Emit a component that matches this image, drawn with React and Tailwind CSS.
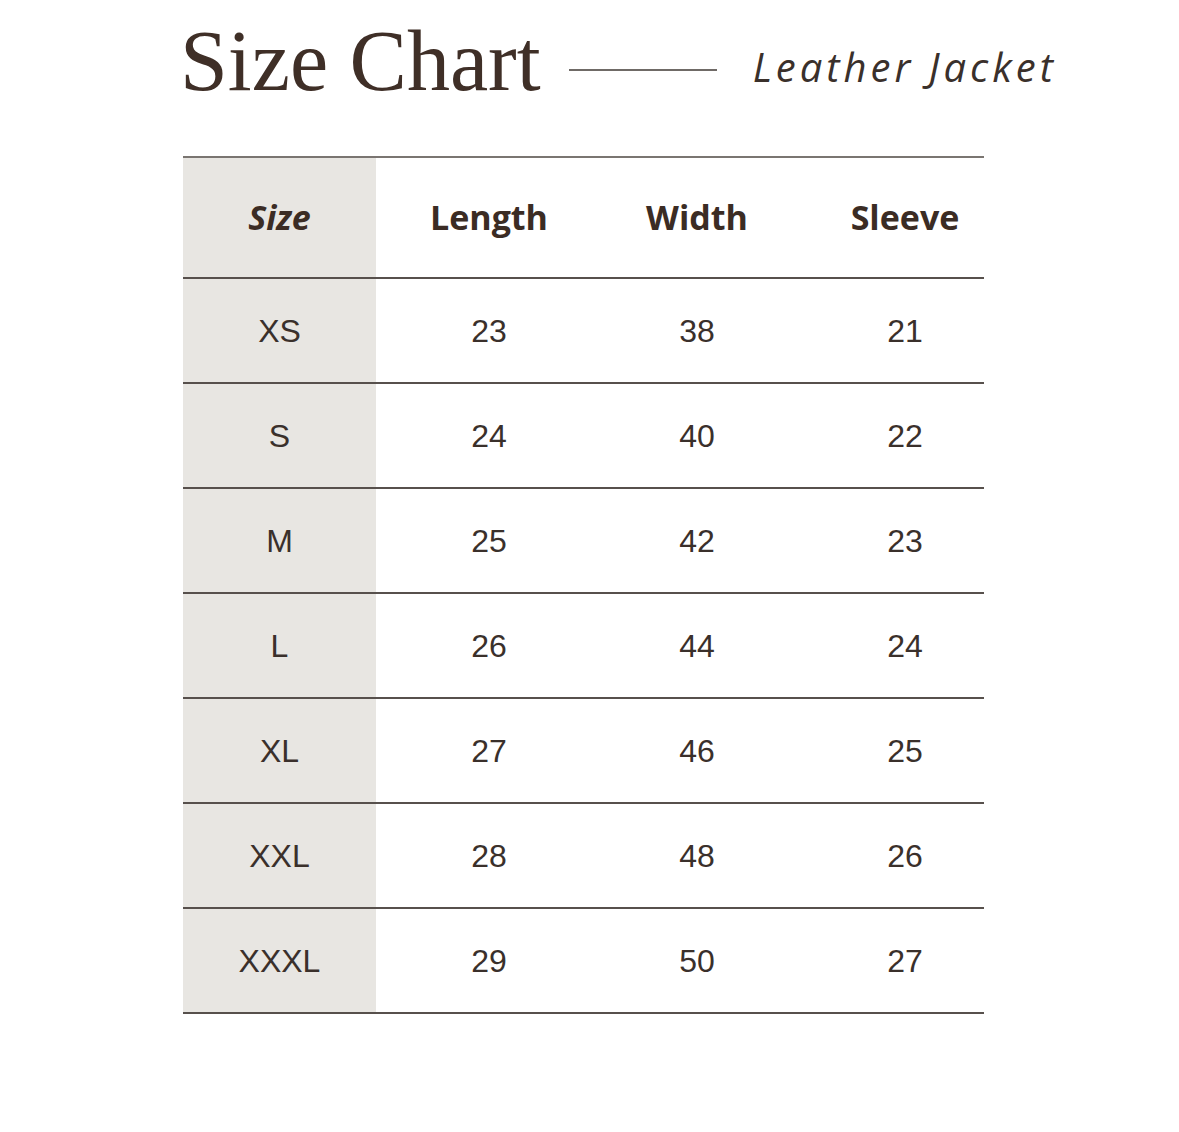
const rows = [
  ['XS', '23', '38', '21'],
  ['S', '24', '40', '22'],
  ['M', '25', '42', '23'],
  ['L', '26', '44', '24'],
  ['XL', '27', '46', '25'],
  ['XXL', '28', '48', '26'],
  ['XXXL', '29', '50', '27'],
];

const sans = { fontFamily: '"Liberation Sans", Arial, sans-serif' };

const Row = ({ cells }) => (
  <div className="flex h-[105px] border-b-2 border-[#57504c]">
    <div className="w-[193px] bg-[#e8e6e2] flex items-center justify-center text-[32px] text-[#3a302b]" style={sans}>
      {cells[0]}
    </div>
    <div className="w-[226px] flex items-center justify-center text-[32px] text-[#3a302b]" style={sans}>
      {cells[1]}
    </div>
    <div className="w-[190px] flex items-center justify-center text-[32px] text-[#3a302b]" style={sans}>
      {cells[2]}
    </div>
    <div className="flex-1 pl-[34px] flex items-center justify-center text-[32px] text-[#3a302b]" style={sans}>
      {cells[3]}
    </div>
  </div>
);

export default function App() {
  return (
    <div className="w-[1179px] h-[1132px] bg-white text-[#3d2f27]">
      {/* heading */}
      <div className="flex items-start pl-[180px] pt-[18px]">
        <h1
          className="text-[86px] leading-none text-[#3f2f27]"
          style={{ fontFamily: '"Liberation Serif", "Times New Roman", serif' }}
        >
          Size Chart
        </h1>
        <div className="ml-[28px] mt-[51px] w-[148px] h-[2px] bg-[#6f6a66]" />
        <div
          className="ml-[36px] mt-[29px] text-[40px] leading-none italic tracking-[4px] text-[#3a302b]"
          style={{ fontFamily: '"Open Sans", sans-serif' }}
        >
          Leather Jacket
        </div>
      </div>

      {/* table */}
      <div className="ml-[183px] mt-[52px] w-[801px] border-t-2 border-[#7a7571]">
        <div
          className="flex h-[121px] border-b-2 border-[#57504c] text-[34px] font-bold text-[#3b2c24]"
          style={{ fontFamily: '"Open Sans", sans-serif' }}
        >
          <div className="w-[193px] bg-[#e8e6e2] flex items-center justify-center italic">Size</div>
          <div className="w-[226px] flex items-center justify-center">Length</div>
          <div className="w-[190px] flex items-center justify-center">Width</div>
          <div className="flex-1 pl-[34px] flex items-center justify-center">Sleeve</div>
        </div>
        {rows.map((r) => (
          <Row key={r[0]} cells={r} />
        ))}
      </div>
    </div>
  );
}
